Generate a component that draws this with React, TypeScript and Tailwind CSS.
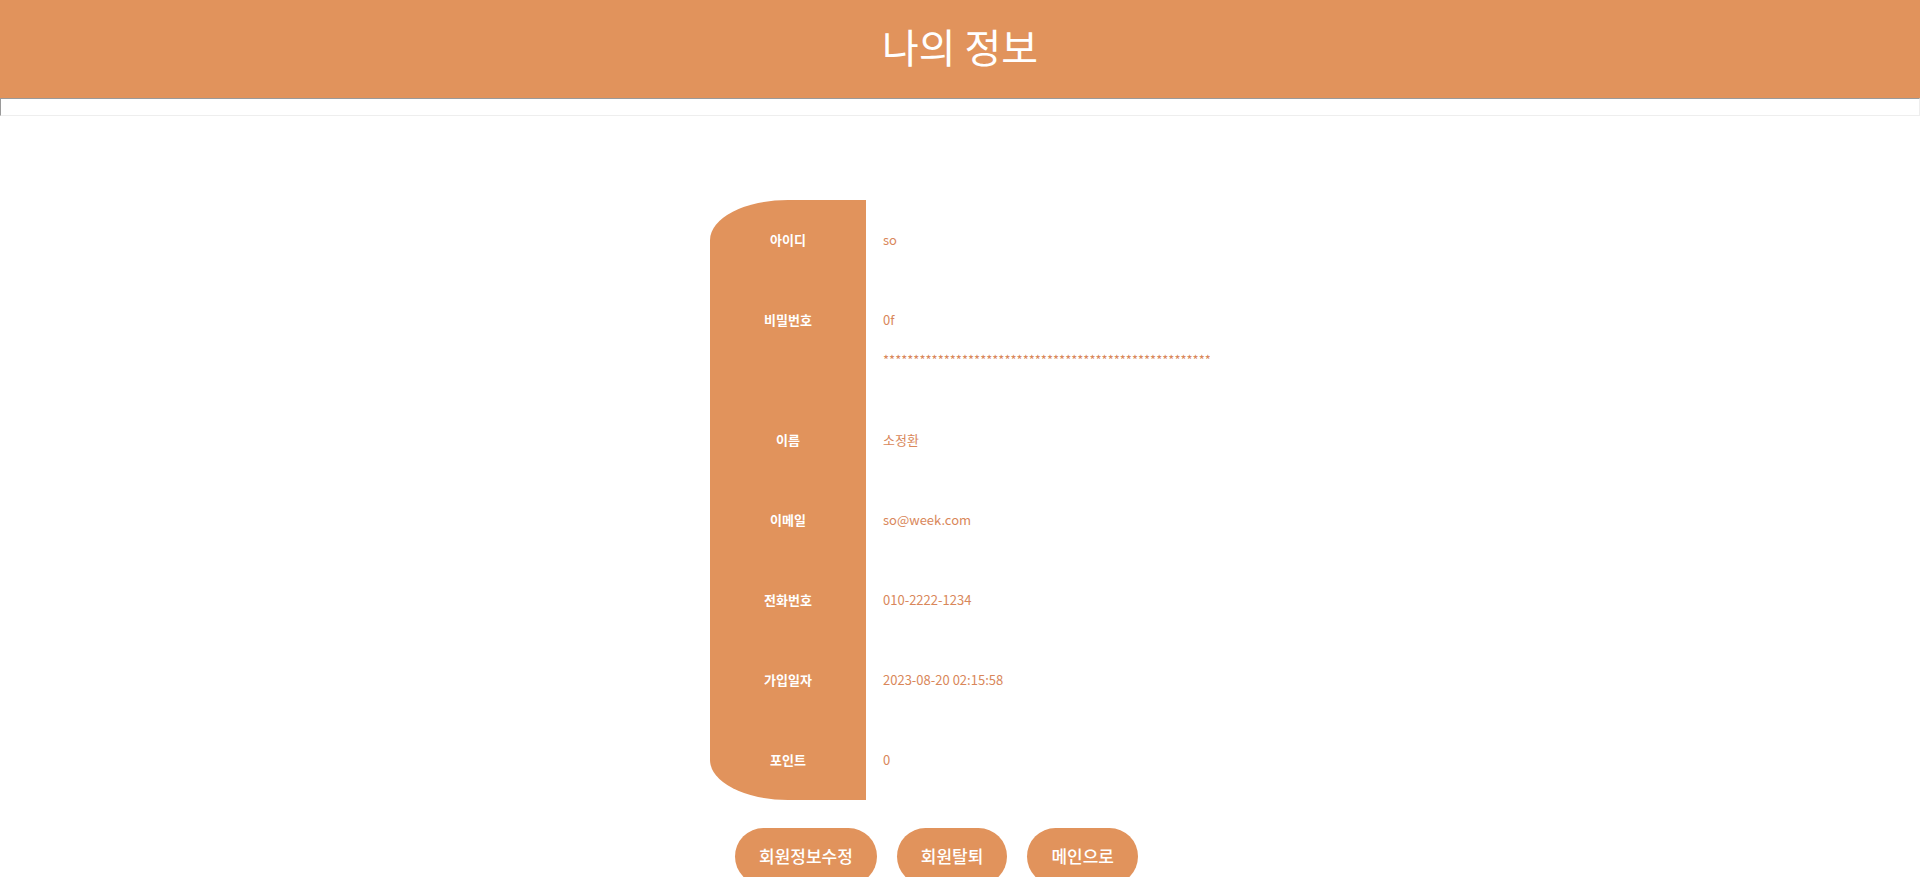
const fields = [
  { label: '아이디', value: 'so' },
  { label: '비밀번호', value: '0f', masked: '*'.repeat(54) },
  { label: '이름', value: '소정환' },
  { label: '이메일', value: 'so@week.com' },
  { label: '전화번호', value: '010-2222-1234' },
  { label: '가입일자', value: '2023-08-20 02:15:58' },
  { label: '포인트', value: '0' },
];

const actions = ['회원정보수정', '회원탈퇴', '메인으로'];

export default function App() {
  return (
    <div className="bg-white font-['Noto_Sans_CJK_KR',sans-serif]">
      <header className="bg-[#e1935c] pt-[17px] pb-[23px] text-center text-white">
        <h1 className="text-[40px] leading-[58px] font-normal">나의 정보</h1>
      </header>
      <div className="h-[18px] border border-t-[#9a9a9a] border-r-[#eeeeee] border-b-[#eeeeee] border-l-[#9a9a9a]" />

      <main className="mx-auto w-full max-w-[500px] pt-[84px]">
        <table className="w-full table-fixed border-separate border-spacing-0 text-[13px] leading-10">
          <tbody>
            {fields.map((field) => (
              <tr key={field.label} className="group">
                <th
                  scope="row"
                  className="w-[156px] bg-[#e1935c] py-5 text-center align-top font-bold text-white group-first:rounded-tl-[50%] group-last:rounded-bl-[50%]"
                >
                  {field.label}
                </th>
                <td className="overflow-hidden py-5 pl-[17px] align-top text-[#d9875a]">
                  {field.value}
                  {field.masked && <div className="overflow-hidden">{field.masked}</div>}
                </td>
              </tr>
            ))}
          </tbody>
        </table>

        <div className="flex gap-5 pt-7 pl-[25px]">
          {actions.map((action) => (
            <button
              key={action}
              type="button"
              className="cursor-pointer rounded-[30px] bg-[#e1935c] px-6 pt-[15px] pb-[17px] text-[17px] leading-[25px] font-medium whitespace-nowrap text-white"
            >
              {action}
            </button>
          ))}
        </div>
      </main>
    </div>
  );
}
